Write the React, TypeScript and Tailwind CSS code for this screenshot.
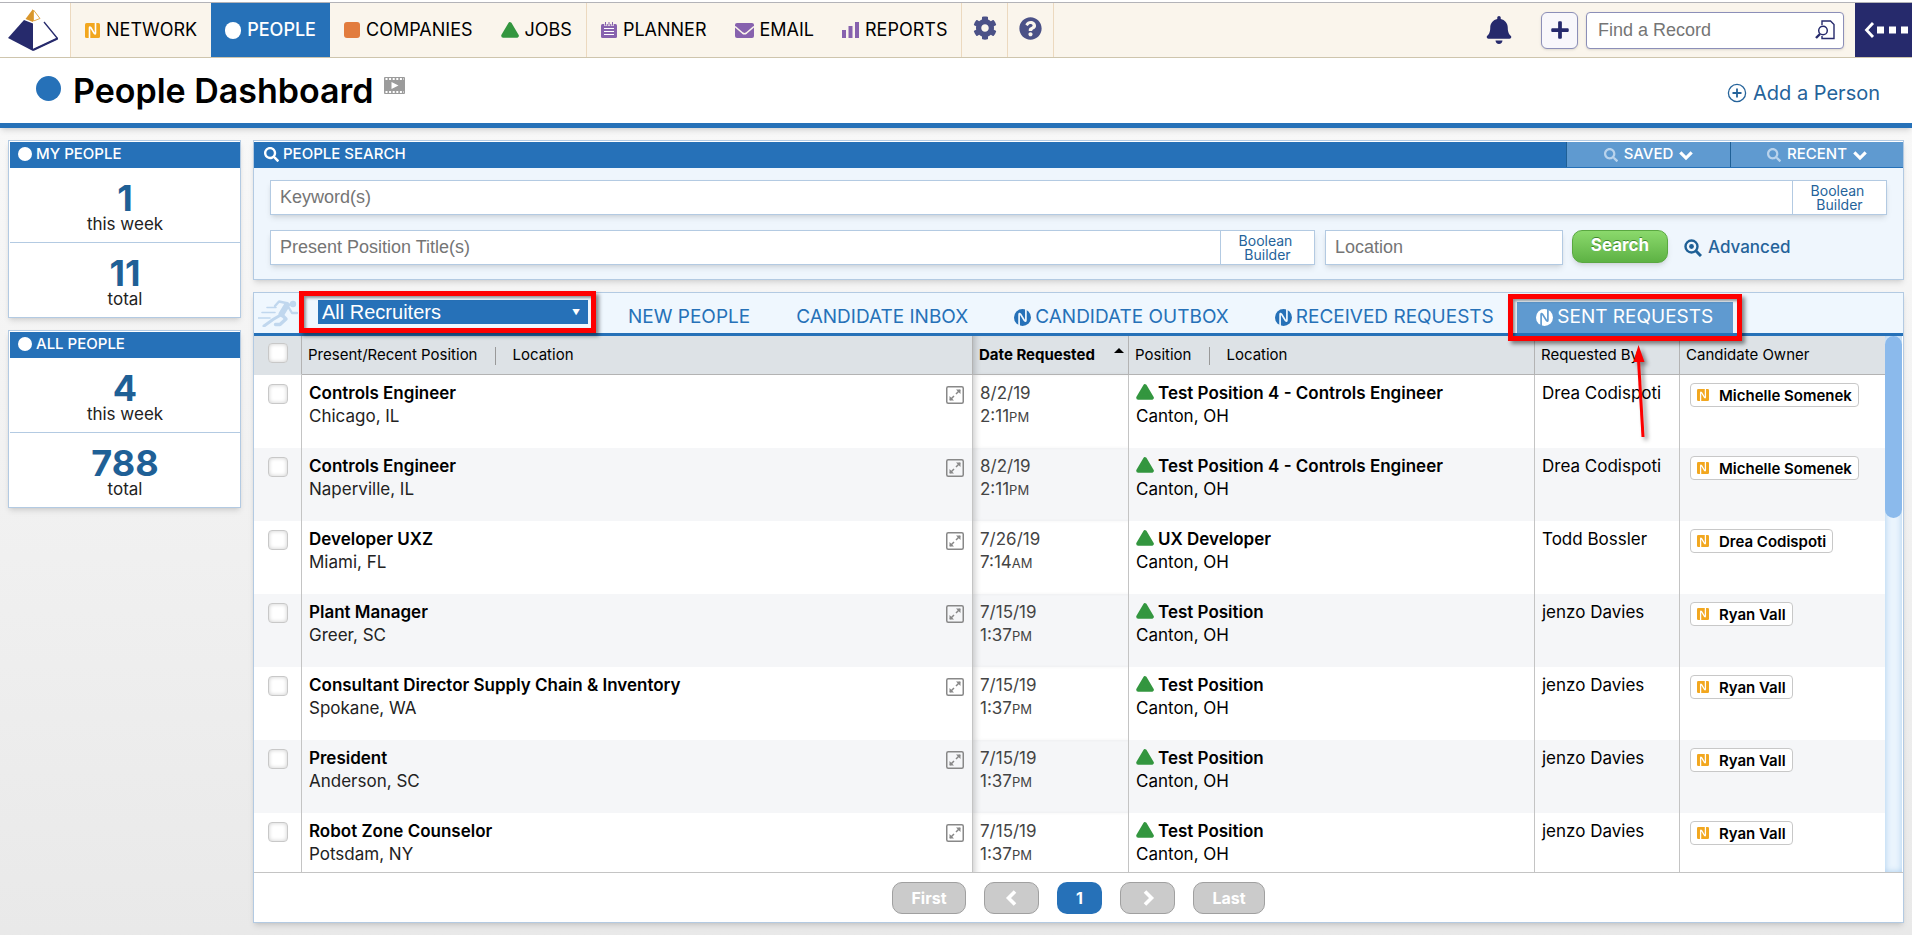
import * as React from 'react';
import { clsx } from 'clsx';
import { FaBell, FaCog, FaPlus, FaQuestionCircle, FaSearch } from 'react-icons/fa';

type IconProps = { className?: string };

function LogoIcon() {
  return (
    <svg viewBox="0 0 50 42" className="w-[50px] h-[42px]" fill="none">
      <path d="M25 0 L17.5 10 L25 13 Z" fill="#d9962b" />
      <path d="M25.5 1 L32 9.5 L25.5 12 Z" stroke="#e0a848" strokeWidth="1" />
      <path d="M16 11 L25 14.5 V42 L0 29 Z" fill="#262a6c" />
      <path d="M36 13 L49.5 29.5 L25 41" stroke="#262a6c" strokeWidth="1.3" />
      <path d="M49.5 29.5 L25 41" stroke="#262a6c" strokeWidth="2" />
    </svg>
  );
}

function NetworkIcon({ className }: IconProps) {
  return (
    <svg viewBox="0 0 14 14" className={className}>
      <rect width="14" height="14" rx="1.5" fill="#f2a71f" />
      <path d="M4.2 14 V4.5 Q4.2 3 5.4 4.2 L8.6 9.6 Q9.8 11 9.8 9.4 V0" fill="none" stroke="#fff" strokeWidth="1.5" />
    </svg>
  );
}

function NetworkBadgeIcon({ className }: IconProps) {
  return (
    <svg viewBox="0 0 16 16" className={className}>
      <defs>
        <mask id="network-cut">
          <rect width="16" height="16" fill="#fff" />
          <path d="M4.8 16 V5.4 Q4.8 3.6 6.2 5 L9.8 10.8 Q11.2 12.4 11.2 10.6 V0" fill="none" stroke="#000" strokeWidth="1.6" />
        </mask>
      </defs>
      <circle cx="8" cy="8" r="8" fill="currentColor" mask="url(#network-cut)" />
    </svg>
  );
}

function ChevronIcon({ className }: IconProps) {
  return (
    <svg viewBox="0 0 16 16" className={className} fill="none" stroke="currentColor" strokeWidth="3.6">
      <path d="M1.5 5 L8 11.5 L14.5 5" />
    </svg>
  );
}

function TriangleIcon({ className }: IconProps) {
  return (
    <svg viewBox="0 0 18 16" className={className}>
      <path d="M9 2.2 L15.8 13.8 H2.2 Z" fill="#33963f" stroke="#33963f" strokeWidth="4" strokeLinejoin="round" />
    </svg>
  );
}

function PlannerIcon() {
  return (
    <svg viewBox="0 0 16 16" className="size-4">
      <path d="M1.5 2 H14.5 Q16 2 16 3.5 V14.5 Q16 16 14.5 16 H1.5 Q0 16 0 14.5 V3.5 Q0 2 1.5 2 Z" fill="#8762ae" />
      <path d="M4.5 0 V4 M8 0 V4 M11.5 0 V4" stroke="#faf5ec" strokeWidth="2.4" />
      <path d="M4.5 0 V3.5 M8 0 V3.5 M11.5 0 V3.5" stroke="#8762ae" strokeWidth="1" />
      <path d="M3 6.5 H13 M3 9.5 H13 M3 12.5 H13" stroke="#fff" strokeWidth="1.2" />
    </svg>
  );
}

function EmailIcon() {
  return (
    <svg viewBox="0 0 19 16" className="w-[19px] h-4">
      <rect y="1" width="19" height="15" rx="2" fill="#8762ae" />
      <path d="M0 4.5 L7.5 11 Q9.5 12.5 11.5 11 L19 4.5" fill="none" stroke="#faf5ec" strokeWidth="1.6" />
    </svg>
  );
}

function ReportsIcon() {
  return (
    <svg viewBox="0 0 17 16" className="w-[17px] h-4" fill="#8762ae">
      <rect y="8" width="4" height="8" />
      <rect x="6.5" y="4" width="4" height="12" />
      <rect x="13" width="4" height="16" />
    </svg>
  );
}

function FilmIcon() {
  return (
    <svg viewBox="0 0 21 17" className="w-[21px] h-[17px]">
      <rect width="21" height="17" rx="1" fill="#9b9b9b" />
      <path d="M1.5 2 H20 M1.5 15 H20" stroke="#fff" strokeWidth="1.8" strokeDasharray="2 1.6" />
      <path d="M7.5 5 L14.5 8.5 L7.5 12 Z" fill="#fff" />
    </svg>
  );
}

function RecordSearchIcon() {
  return (
    <svg viewBox="0 0 20 20" className="size-5" fill="none" stroke="#262a6c">
      <path d="M7 5 V1 H15.5 L19 4.5 V18.5 H7 V16" strokeWidth="1.4" />
      <circle cx="8" cy="10.5" r="4.3" fill="#fff" strokeWidth="1.5" />
      <path d="M5 14 L1 18" strokeWidth="2.4" />
    </svg>
  );
}

function CollapseIcon() {
  return (
    <svg viewBox="0 0 44 16" className="w-11 h-4">
      <path d="M9 1 L2.5 8 L9 15" fill="none" stroke="#fff" strokeWidth="2.8" />
      <path d="M13 4.5 h7 v7 h-7 z M25 4.5 h7 v7 h-7 z M37 4.5 h7 v7 h-7 z" fill="#fff" />
    </svg>
  );
}

function PlusCircleIcon() {
  return (
    <svg viewBox="0 0 20 20" className="size-5" fill="none" stroke="#25639a">
      <circle cx="10" cy="10" r="8.6" strokeWidth="1.3" />
      <path d="M10 5.5 V14.5 M5.5 10 H14.5" strokeWidth="1.8" />
    </svg>
  );
}

function AdvancedIcon() {
  return (
    <svg viewBox="0 0 18 18" className="size-[18px]" fill="none" stroke="#1f6096">
      <circle cx="7.5" cy="7.5" r="6" strokeWidth="2.4" />
      <circle cx="7.5" cy="7.5" r="2.4" fill="#1f6096" stroke="none" />
      <path d="M12 12 L17 17" strokeWidth="3" />
    </svg>
  );
}

function ExpandIcon() {
  return (
    <svg viewBox="0 0 18 18" className="size-[18px]" fill="none" stroke="#888">
      <rect x="0.75" y="0.75" width="16.5" height="16.5" rx="1.5" strokeWidth="1.5" />
      <path d="M10 8 L14 4 M8 10 L4 14" strokeWidth="1.5" />
      <path d="M10 3.5 H14.5 V8 Z M3.5 10 V14.5 H8 Z" fill="#888" stroke="none" />
    </svg>
  );
}

function RunnerIcon() {
  return (
    <svg viewBox="0 0 40 27" className="w-10 h-[27px]" fill="none" stroke="#c0d7ee" strokeLinecap="round">
      <circle cx="35" cy="4" r="3.2" fill="#c0d7ee" stroke="none" />
      <path d="M29 5 L23.5 14" strokeWidth="6" />
      <path d="M24 15 L28 19 L22 24.5 H17.5" strokeWidth="3.4" strokeLinejoin="round" />
      <path d="M28 3 L21 1.5 L17 6" strokeWidth="2.4" strokeLinejoin="round" />
      <path d="M31 8 L34 13 L39 13" strokeWidth="2.4" strokeLinejoin="round" />
      <path d="M21 16 L15 19.5 L6 26" strokeWidth="3" />
      <path d="M9 7.5 H18 M4 12.5 H17 M0.5 18 H12" strokeWidth="1.6" />
    </svg>
  );
}

const navGroups: { label: string; icon: React.ReactNode; active?: boolean }[][] = [
  [
    { label: 'NETWORK', icon: <NetworkIcon className="size-[15px]" /> },
    { label: 'PEOPLE', icon: <span className="h-[17px] w-4 rounded-full bg-white" />, active: true },
    { label: 'COMPANIES', icon: <span className="size-4 rounded-[3px] bg-[#e27c3e]" /> },
    { label: 'JOBS', icon: <TriangleIcon className="w-[18px] h-4" /> },
  ],
  [
    { label: 'PLANNER', icon: <PlannerIcon /> },
    { label: 'EMAIL', icon: <EmailIcon /> },
    { label: 'REPORTS', icon: <ReportsIcon /> },
  ],
];

const stats = [
  { title: 'MY PEOPLE', week: 1, total: 11 },
  { title: 'ALL PEOPLE', week: 4, total: 788 },
];

const tabs = [
  { label: 'NEW PEOPLE' },
  { label: 'CANDIDATE INBOX' },
  { label: 'CANDIDATE OUTBOX', network: true },
  { label: 'RECEIVED REQUESTS', network: true },
];

const requests = [
  { title: 'Controls Engineer', place: 'Chicago, IL', date: '8/2/19', time: '2:11', half: 'PM', position: 'Test Position 4 - Controls Engineer', by: 'Drea Codispoti', owner: 'Michelle Somenek' },
  { title: 'Controls Engineer', place: 'Naperville, IL', date: '8/2/19', time: '2:11', half: 'PM', position: 'Test Position 4 - Controls Engineer', by: 'Drea Codispoti', owner: 'Michelle Somenek' },
  { title: 'Developer UXZ', place: 'Miami, FL', date: '7/26/19', time: '7:14', half: 'AM', position: 'UX Developer', by: 'Todd Bossler', owner: 'Drea Codispoti' },
  { title: 'Plant Manager', place: 'Greer, SC', date: '7/15/19', time: '1:37', half: 'PM', position: 'Test Position', by: 'jenzo Davies', owner: 'Ryan Vall' },
  { title: 'Consultant Director Supply Chain & Inventory', place: 'Spokane, WA', date: '7/15/19', time: '1:37', half: 'PM', position: 'Test Position', by: 'jenzo Davies', owner: 'Ryan Vall' },
  { title: 'President', place: 'Anderson, SC', date: '7/15/19', time: '1:37', half: 'PM', position: 'Test Position', by: 'jenzo Davies', owner: 'Ryan Vall' },
  { title: 'Robot Zone Counselor', place: 'Potsdam, NY', date: '7/15/19', time: '1:37', half: 'PM', position: 'Test Position', by: 'jenzo Davies', owner: 'Ryan Vall' },
];

function TopBar() {
  return (
    <header className="mt-0.5 flex h-14 shrink-0 items-stretch border-t border-b border-t-[#b3b3b8] border-b-[#cfc6ae] bg-[#faf5ec]">
      <a href="#home" aria-label="Home" className="flex w-[71px] items-center justify-center border-r border-[#ecd9bf] bg-white pr-1">
        <LogoIcon />
      </a>
      {navGroups.map((group, i) => (
        <nav key={i} className="flex border-r border-[#ecd9bf]">
          {group.map((item) => (
            <a
              key={item.label}
              href={`#${item.label.toLowerCase()}`}
              className={clsx(
                'flex items-center gap-1.5 px-3.5 text-lg',
                item.active ? 'bg-[#2671b8] font-medium text-white' : 'text-black'
              )}
            >
              {item.icon}
              {item.label}
            </a>
          ))}
        </nav>
      ))}
      <button aria-label="Settings" className="flex w-[46px] items-center justify-center border-r border-[#ecd9bf] pb-1 text-[#4b5187]">
        <FaCog size={24} />
      </button>
      <button aria-label="Help" className="flex w-[46px] items-center justify-center border-r border-[#ecd9bf] pb-1 text-[#4b5187]">
        <FaQuestionCircle size={23} />
      </button>
      <div className="ml-auto flex items-center">
        <button aria-label="Notifications" className="mr-7 text-[#262a6c]">
          <FaBell size={28} />
        </button>
        <button aria-label="Add" className="mr-2 flex size-[37px] items-center justify-center rounded-md border border-[#8c8fb8] bg-[#f8f7fb] text-[#262a6c] shadow-sm">
          <FaPlus size={20} />
        </button>
        <div className="mr-[11px] flex h-[37px] w-[258px] items-center rounded border border-[#8c8fb8] bg-white pr-2 pl-[11px] shadow-sm">
          <input
            aria-label="Find a Record"
            placeholder="Find a Record"
            className="min-w-0 flex-1 font-['Liberation_Sans',sans-serif] text-lg outline-none placeholder:text-[#757575]"
          />
          <button aria-label="Find">
            <RecordSearchIcon />
          </button>
        </div>
        <button aria-label="Collapse" className="flex h-full w-[57px] items-center justify-center bg-[#262a6c] pl-1">
          <CollapseIcon />
        </button>
      </div>
    </header>
  );
}

function StatCard({ title, week, total }: { title: string; week: number; total: number }) {
  return (
    <section className="border border-[#b3cae2] bg-white pt-px pl-px shadow-md">
      <h2 className="flex h-[26px] items-center gap-1 bg-[#2671b8] px-2 pb-0.5 text-[15px] font-medium text-white">
        <span className="size-3.5 rounded-full bg-white" />
        {title}
      </h2>
      <Stat value={week} label="this week" />
      <div className="border-t border-[#b3cae2]">
        <Stat value={total} label="total" />
      </div>
    </section>
  );
}

function Stat({ value, label }: { value: number; label: string }) {
  return (
    <div className="h-[74px] pt-3 text-center">
      <div className="text-4xl/[36px] font-bold text-[#1f6096]">{value}</div>
      <div className="text-[17px]/[17px] text-[#222]">{label}</div>
    </div>
  );
}

function BooleanBuilder() {
  return (
    <button className="w-[95px] border border-[#b3cae2] bg-white pr-1 text-center text-sm/[14px] text-[#25639a]">
      Boolean
      <br />
      &nbsp;Builder
    </button>
  );
}

function SearchInput({ label, className }: { label: string; className?: string }) {
  return (
    <input
      aria-label={label}
      placeholder={label}
      className={clsx(
        "h-[35px] min-w-0 border border-[#b3cae2] bg-white px-[9px] font-['Liberation_Sans',sans-serif] text-lg outline-none placeholder:text-[#757575]",
        className
      )}
    />
  );
}

function PeopleSearch() {
  return (
    <section className="border border-[#b3cae2] bg-[#eff6fd] shadow-md">
      <div className="flex h-[27px] items-stretch border-t border-white bg-[#2671b8] text-[15px] font-medium text-white">
        <h2 className="flex flex-1 items-center gap-1 pb-0.5 pl-2.5">
          <FaSearch size={15} />
          PEOPLE SEARCH
        </h2>
        <button className="mb-px flex w-[164px] items-center justify-center gap-1.5 border-l border-[#1f6096] bg-[#5f9ad0]">
          <FaSearch size={14} className="text-[#b9d3ec]" />
          SAVED
          <ChevronIcon className="size-3.5" />
        </button>
        <button className="mb-px flex w-[173px] items-center justify-center gap-1.5 border-l border-[#1f6096] bg-[#5f9ad0]">
          <FaSearch size={14} className="text-[#b9d3ec]" />
          RECENT
          <ChevronIcon className="size-3.5" />
        </button>
      </div>
      <form className="flex flex-col gap-[15px] px-4 pt-3 pb-[13px]" onSubmit={(e) => e.preventDefault()}>
        <div className="flex shadow-md">
          <SearchInput label="Keyword(s)" className="flex-1 border-r-0" />
          <BooleanBuilder />
        </div>
        <div className="flex items-start">
          <div className="flex flex-1 shadow-md">
            <SearchInput label="Present Position Title(s)" className="flex-1 border-r-0" />
            <BooleanBuilder />
          </div>
          <SearchInput label="Location" className="ml-2.5 w-[238px] shadow-md" />
          <button className="ml-[9px] h-[33px] w-24 rounded-[10px] border border-[#5aa841] bg-linear-to-b from-[#8bd96c] to-[#5db244] pb-0.5 text-[17px] font-bold text-white shadow-md [text-shadow:0_-1px_0_#3f8a2c]">
            Search
          </button>
          <a href="#advanced" className="ml-4 flex h-9 w-[203px] items-center gap-1.5 text-[17px] font-medium text-[#25639a]">
            <AdvancedIcon />
            Advanced
          </a>
        </div>
      </form>
    </section>
  );
}

function TabStrip() {
  return (
    <div className="flex h-[43px] items-stretch border-b-3 border-[#2671b8] bg-[#eff7fe]">
      <div className="flex w-[46px] shrink-0 items-center pl-1">
        <RunnerIcon />
      </div>
      <div className="relative z-10 flex shrink-0 items-center pr-[7px] pb-0.5 pl-[18px]">
        <div className="relative">
          <select
            aria-label="Recruiter"
            className="h-6 w-[270px] appearance-none bg-[#2671b8] px-1 font-['Liberation_Sans',sans-serif] text-xl/6 text-white outline-none"
          >
            <option>All Recruiters</option>
          </select>
          <span className="pointer-events-none absolute inset-y-0 right-2 flex items-center text-[8px] text-white">▼</span>
        </div>
        <div className="pointer-events-none absolute -inset-x-px -top-[2px] bottom-0 border-5 border-[#fe0000] shadow-[3px_3px_4px_rgba(0,0,0,0.45),inset_2px_2px_3px_rgba(0,0,0,0.4)]" />
      </div>
      <nav className="flex flex-1 items-stretch pt-[9px] pl-2.5 text-[19px] text-[#2671b8]">
        {tabs.map((tab) => (
          <a key={tab.label} href="#tab" className="flex items-center gap-1 px-[23px] whitespace-nowrap">
            {tab.network && <NetworkBadgeIcon className="size-[17px]" />}
            {tab.label}
          </a>
        ))}
        <div className="relative z-10 flex">
          <a
            href="#sent"
            aria-current="page"
            className="flex w-[216px] items-center justify-center gap-1 bg-[#5f9ad0] whitespace-nowrap text-white"
          >
            <NetworkBadgeIcon className="size-[17px]" />
            SENT REQUESTS
          </a>
          <div className="pointer-events-none absolute -inset-x-[9px] -top-2 -bottom-2 border-5 border-[#fe0000] shadow-[3px_3px_4px_rgba(0,0,0,0.45),inset_2px_2px_3px_rgba(0,0,0,0.4)]" />
          <svg viewBox="0 0 20 96" className="pointer-events-none absolute top-full left-[113px] mt-3 h-24 w-5 drop-shadow-[3px_3px_2px_rgba(0,0,0,0.45)]">
            <path d="M8.5 15 L13 92" stroke="#fe0000" strokeWidth="3" />
            <path d="M8.5 0 L14.5 17 H3.5 Z" fill="#fe0000" />
          </svg>
        </div>
      </nav>
    </div>
  );
}

const boxClass =
  'block size-5 appearance-none rounded border border-[#c8c8c8] bg-white shadow-[inset_0_0_4px_rgba(0,0,0,0.2)]';
const headClass = 'border-b border-[#b3b3b3] px-1.5 text-left text-[15px] font-normal';

function HeadDivider() {
  return <span className="mr-4 ml-[18px] inline-block h-[18px] w-px bg-[#999] align-middle" />;
}

function RequestsTable() {
  return (
    <table className="w-full table-fixed border-separate border-spacing-0 text-black">
      <colgroup>
        <col className="w-12" />
        <col />
        <col className="w-[156px]" />
        <col className="w-[406px]" />
        <col className="w-[145px]" />
        <col className="w-[205px]" />
      </colgroup>
      <thead>
        <tr className="h-[39px] bg-[#dde2e6]">
          <th className="border-r border-b border-r-[#b3b3b3] border-b-[#dde2e6] pb-1 pl-3.5">
            <input type="checkbox" aria-label="Select all" className={boxClass} />
          </th>
          <th className={clsx(headClass, 'border-r')}>
            Present/Recent Position
            <HeadDivider />
            Location
          </th>
          <th aria-sort="ascending" className={clsx(headClass, 'border-r pr-1 shadow-[inset_6px_0_6px_-4px_rgba(0,0,0,0.2)]')}>
            <span className="flex items-center justify-between font-bold whitespace-nowrap">
              Date Requested
              <svg viewBox="0 0 10 5" className="mb-2.5 h-[5px] w-2.5 shrink-0">
                <path d="M5 0 L10 5 H0 Z" />
              </svg>
            </span>
          </th>
          <th className={clsx(headClass, 'border-r')}>
            Position
            <HeadDivider />
            Location
          </th>
          <th className={clsx(headClass, 'border-r')}>Requested By</th>
          <th className={headClass}>Candidate Owner</th>
        </tr>
      </thead>
      <tbody className="text-[17px]/[23px]">
        {requests.map((row, i) => (
          <tr key={i} className="h-[73px] align-top odd:bg-white even:bg-[#f5f6f8]">
            <td className="border-r border-[#c4c4c4] pt-[9px] pl-3.5">
              <input type="checkbox" aria-label={`Select ${row.title}`} className={boxClass} />
            </td>
            <td className="border-r border-[#c4c4c4] pt-[7px] pr-2 pl-[7px]">
              <div className="flex justify-between">
                <div>
                  <div className="font-semibold">{row.title}</div>
                  <div className="text-[#222]">{row.place}</div>
                </div>
                <button aria-label="Expand" className="mt-1 self-start">
                  <ExpandIcon />
                </button>
              </div>
            </td>
            <td className="border-r border-[#c4c4c4] pt-[7px] pl-[7px] text-[#444] shadow-[inset_6px_0_6px_-4px_rgba(0,0,0,0.2)]">
              {row.date}
              <br />
              {row.time}
              <span className="text-[13px]">{row.half}</span>
            </td>
            <td className="border-r border-[#c4c4c4] pt-[7px] pl-[7px]">
              <div className="flex gap-1 font-semibold">
                <TriangleIcon className="mt-0.5 h-4 w-[18px]" />
                {row.position}
              </div>
              Canton, OH
            </td>
            <td className="border-r border-[#c4c4c4] pt-[7px] pl-[7px]">{row.by}</td>
            <td className="pt-2 pl-2.5">
              <a
                href="#owner"
                className="inline-flex h-6 items-center gap-2.5 rounded border border-[#c8c8c8] bg-white px-1.5 text-[15px] font-semibold"
              >
                <NetworkIcon className="size-3" />
                {row.owner}
              </a>
            </td>
          </tr>
        ))}
      </tbody>
    </table>
  );
}

const pagerClass =
  'flex h-8 items-center justify-center rounded-[10px] border border-[#a0a0a0] bg-[#cbcbcb] text-base font-bold text-white';

function Pagination() {
  return (
    <div className="flex h-[50px] shrink-0 items-center justify-center gap-[18px] border-t border-[#c4c4c4] bg-white">
      <button className={clsx(pagerClass, 'w-[74px]')}>First</button>
      <button aria-label="Previous page" className={clsx(pagerClass, 'w-[55px]')}>
        <ChevronIcon className="size-4 rotate-90" />
      </button>
      <button aria-current="page" className="h-8 w-[45px] rounded-[10px] bg-[#2671b8] text-base font-bold text-white">
        1
      </button>
      <button aria-label="Next page" className={clsx(pagerClass, 'w-[55px]')}>
        <ChevronIcon className="size-4 -rotate-90" />
      </button>
      <button className={clsx(pagerClass, 'w-[72px]')}>Last</button>
    </div>
  );
}

export default function App() {
  return (
    <div className="flex h-screen flex-col bg-white font-[Inter,sans-serif]">
      <TopBar />
      <div className="relative z-20 flex h-[70px] shrink-0 items-center border-b-5 border-[#2671b8] bg-white pr-8 pl-9 shadow-md">
        <span className="mb-1 size-[25px] rounded-full bg-[#2671b8]" />
        <h1 className="ml-3 text-[34px]/[40px] font-semibold text-black">People Dashboard</h1>
        <span className="mb-2.5 ml-2.5">
          <FilmIcon />
        </span>
        <a href="#add" className="ml-auto flex items-center gap-1.5 pt-1 text-xl text-[#25639a]">
          <PlusCircleIcon />
          Add a Person
        </a>
      </div>
      <div className="flex min-h-0 flex-1 gap-3 bg-linear-to-b from-[#f8f8f8] to-[#e9e9e9] px-2 py-3">
        <aside className="flex w-[233px] shrink-0 flex-col gap-3">
          {stats.map((s) => (
            <StatCard key={s.title} {...s} />
          ))}
        </aside>
        <main className="flex min-w-0 flex-1 flex-col gap-3">
          <PeopleSearch />
          <section className="flex min-h-0 flex-1 flex-col border border-[#b3cae2] bg-white shadow-md">
            <TabStrip />
            <div className="flex min-h-0 flex-1">
              <div className="min-w-0 flex-1 overflow-hidden">
                <RequestsTable />
              </div>
              <div className="mr-px w-[17px] shrink-0 bg-[#eaf4fd] shadow-[inset_0_0_6px_#a9cdee]">
                <div className="h-[34%] rounded-full bg-[#8bbaec]" />
              </div>
            </div>
            <Pagination />
          </section>
        </main>
      </div>
    </div>
  );
}
